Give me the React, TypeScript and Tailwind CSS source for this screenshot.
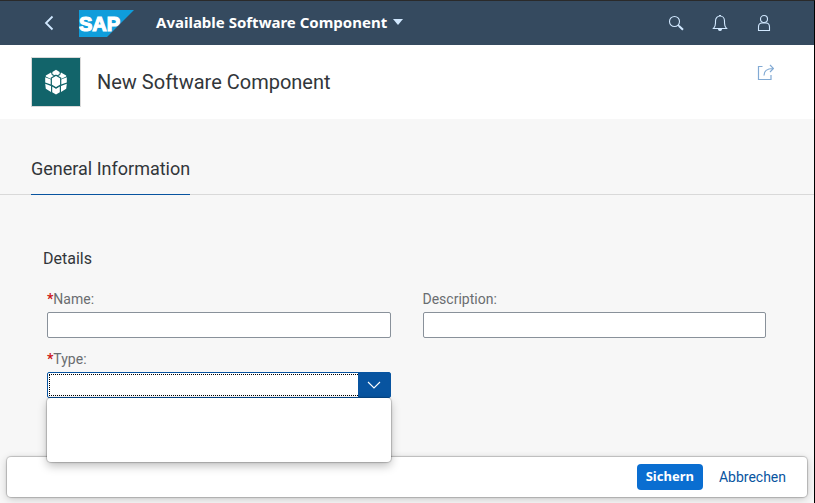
import React, { useState } from 'react';

interface FieldProps {
  id: string;
  label: string;
  required?: boolean;
  children: React.ReactNode;
}

const Field: React.FC<FieldProps> = ({ id, label, required, children }) => (
  <div className="relative flex flex-col">
    <label htmlFor={id} className="h-6 text-sm leading-[22px] text-[#6a6d70]">
      {required && <span className="font-bold text-[#cc1919]">*</span>}
      {label}:
    </label>
    {children}
  </div>
);

const SapLogo = () => (
  <svg width="55" height="27" viewBox="0 0 55 27" role="img" aria-label="SAP">
    <path d="M0 0H55L28 27H0Z" fill="#0f9ddb" />
    <text
      x="0"
      y="21"
      fill="#fff"
      stroke="#fff"
      strokeWidth="1.200"
      fontFamily="Liberation Sans, sans-serif"
      fontWeight="700"
      fontSize="20"
    >
      SAP
    </text>
  </svg>
);

const ComponentIcon = () => (
  <svg width="24" height="26" viewBox="0 0 24 26" fill="#fff" aria-hidden="true">
    <path d="M12 .800l3.600 2.200v2L12 7 8.400 5V3Z" />
    <path d="M7 3.500l.800 2.600L11 7.500 7 10 1.800 7.500V6.400ZM17 3.500l-.800 2.600L13 7.500l4 2.500 5.200-2.500V6.400Z" />
    <path d="M1.200 8.200L7 10.500V15.500L1.200 13.500ZM22.800 8.200L17 10.500V15.500l5.800-2Z" />
    <path d="M1.200 14.800L7 17v6L1.800 19.800ZM22.800 14.800L17 17v6l5.200-3.200Z" />
    <path d="M8.200 17.500L12 19.800l3.800-2.300v5.800L12 25.500l-3.800-2.200Z" />
    <path d="M12 6.200l4.700 2.800v7L12 18.800 7.300 16V9Z" stroke="#12646a" strokeWidth="1.200" />
  </svg>
);

const App: React.FC = () => {
  const [name, setName] = useState('');
  const [description, setDescription] = useState('');
  const [type, setType] = useState('');
  const [open, setOpen] = useState(true);

  return (
    <div className="flex min-h-screen flex-col border-t border-r border-t-[#2a2a2a] border-r-black bg-[#f7f7f7] font-['Roboto','Noto_Sans',sans-serif] text-[#32363a]">
      <header className="flex h-11 items-center bg-[#354a5f] pr-10 pl-[39px] text-[#d1e8ff]">
        <button type="button" aria-label="Back" className="flex h-8 w-5 items-center justify-center">
          <svg width="10" height="16" viewBox="0 0 10 16" fill="none" stroke="currentColor" strokeWidth="1.8">
            <path d="M8.500 1.500 2 8l6.500 6.500" />
          </svg>
        </button>
        <a href="#home" className="ml-5">
          <SapLogo />
        </a>
        <button
          type="button"
          className="ml-[22px] flex items-center gap-1.5 pb-0.5 font-['Noto_Sans',sans-serif] text-[15px] font-bold text-white"
        >
          Available Software Component
          <svg width="10" height="6" viewBox="0 0 10 6" fill="#d1e8ff" aria-hidden="true">
            <path d="M0 0H10L5 6Z" />
          </svg>
        </button>
        <div className="ml-auto flex items-center gap-6">
          <button type="button" aria-label="Search" className="flex size-5 items-center justify-center">
            <svg width="16" height="16" viewBox="0 0 16 16" fill="none" stroke="currentColor">
              <circle cx="6.500" cy="6.500" r="5" strokeWidth="1.1" />
              <path d="m10 10 1.500 1.500" strokeWidth="1.200" />
              <path d="m11 11 4 3.800" strokeWidth="2" />
            </svg>
          </button>
          <button type="button" aria-label="Notifications" className="flex size-5 items-center justify-center">
            <svg width="16" height="18" viewBox="0 0 16 18" fill="none" stroke="currentColor" strokeWidth="1.1">
              <path d="M1.500 14.500C3 13 3.500 12 3.500 9V7C3.500 4 5.500 2 8 2s4.500 2 4.500 5v2c0 3 .5 4 2 5.500Z" />
              <path d="M6.500 15a1.500 1.500 0 0 0 3 0Z" fill="currentColor" />
              <path d="M8 1v1" strokeWidth="2" />
            </svg>
          </button>
          <button type="button" aria-label="User" className="flex size-5 items-center justify-center">
            <svg width="14" height="18" viewBox="0 0 14 18" fill="none" stroke="currentColor" strokeWidth="1.1">
              <circle cx="7" cy="5" r="3.500" />
              <path d="M1.500 16.500V13c0-2.500 1.500-4 3.500-4h4c2 0 3.500 1.500 3.500 4v3.500Z" />
            </svg>
          </button>
        </div>
      </header>

      <section className="flex h-[74px] items-center bg-white pr-10 pl-[31px]">
        <div className="flex size-[50px] items-center justify-center border border-[#d9d9d9] bg-[#12646a]">
          <ComponentIcon />
        </div>
        <h1 className="ml-4 text-xl">New Software Component</h1>
        <button type="button" aria-label="Share" className="mb-5 ml-auto text-[#82aad4]">
          <svg width="17" height="17" viewBox="0 0 17 17" fill="none" stroke="currentColor" strokeWidth="1.200">
            <path d="M5.500 2.500H1.500v13h12.500V11" />
            <path d="M7 11.500C7 7 9.500 4.500 16 4.500M13 1l3.500 3.500L13 8" />
          </svg>
        </button>
      </section>

      <nav className="flex h-[76px] items-end border-b border-[#d9d9d9] px-[31px]">
        <a href="#general" className="-mb-px border-b border-[#0854a0] pb-[11px] text-lg">
          General Information
        </a>
      </nav>

      <main id="general" className="flex-1 pt-[52px] pr-12 pl-[47px]">
        <h2 className="-ml-1 text-base">Details</h2>
        <form id="component-form" className="mt-[17px] grid grid-cols-2 gap-x-8 gap-y-2.5">
          <Field id="name" label="Name" required>
            <input
              id="name"
              value={name}
              onChange={(e) => setName(e.target.value)}
              className="h-[26px] w-full rounded-xs border border-[#89919a] bg-white px-2 text-sm"
            />
          </Field>
          <Field id="description" label="Description">
            <input
              id="description"
              value={description}
              onChange={(e) => setDescription(e.target.value)}
              className="h-[26px] w-full rounded-xs border border-[#89919a] bg-white px-2 text-sm"
            />
          </Field>
          <Field id="type" label="Type" required>
            <div className="flex h-[26px] rounded-xs border border-[#0854a0] bg-white">
              <input
                id="type"
                role="combobox"
                aria-expanded={open}
                aria-controls="type-list"
                value={type}
                onChange={(e) => setType(e.target.value)}
                className="m-px mr-0 min-w-0 flex-1 border border-r-0 border-dotted border-black px-2 text-sm outline-none"
              />
              <button
                type="button"
                aria-label="Show options"
                onClick={() => setOpen(!open)}
                className="flex w-8 items-center justify-center bg-[#0854a0] text-white"
              >
                <svg width="14" height="8" viewBox="0 0 14 8" fill="none" stroke="currentColor" strokeWidth="1.1">
                  <path d="m1 1 6 6 6-6" />
                </svg>
              </button>
            </div>
            {open && (
              <div
                id="type-list"
                role="listbox"
                aria-label="Type"
                className="absolute inset-x-0 top-full z-10 h-16 rounded bg-white shadow-[0_0_1px_1px_rgba(0,0,0,0.2),0_4px_10px_rgba(0,0,0,0.25)]"
              />
            )}
          </Field>
        </form>
      </main>

      <footer className="sticky bottom-1.5 mx-[7px] mb-1.5 flex items-center justify-end gap-2 rounded bg-white py-[7px] pr-[13px] shadow-[0_0_1px_1px_rgba(0,0,0,0.2),0_2px_8px_rgba(0,0,0,0.2)]">
        <button
          type="submit"
          form="component-form"
          className="h-[26px] rounded bg-[#0a6ed1] px-[9px] font-['Noto_Sans',sans-serif] text-[13px] font-bold text-white"
        >
          Sichern
        </button>
        <button type="button" className="h-[26px] px-2 text-sm text-[#0854a0]">
          Abbrechen
        </button>
      </footer>
    </div>
  );
};

export default App;
